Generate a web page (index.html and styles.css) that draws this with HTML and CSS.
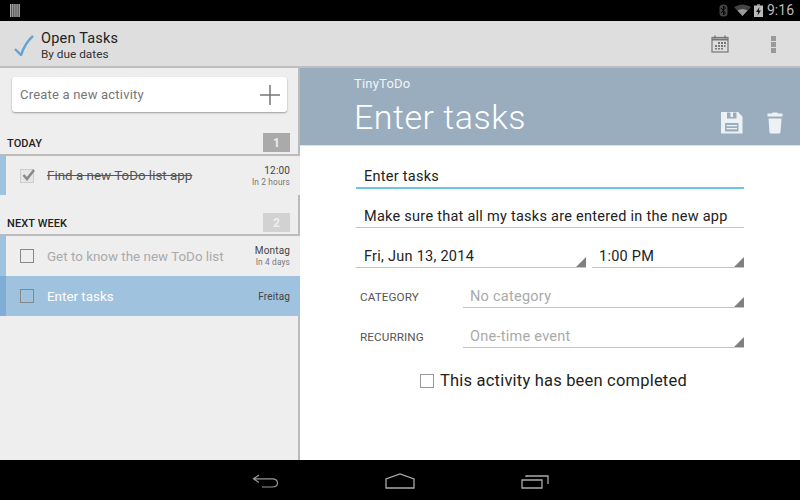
FILE: index.html
```html
<!DOCTYPE html>
<html lang="en">
<head>
<meta charset="utf-8">
<title>Open Tasks</title>
<link rel="stylesheet" href="styles.css">
</head>
<body>
<div class="app">
  <div class="status">
    <svg width="10" height="13" viewBox="0 0 10 13"><path d="M0 0h1.500v13H0zM2.100 0h1.500v13H2.100zM4.200 0h1.500v13H4.200zM6.300 0h1.500v13H6.300zM8.400 0h1.500v13H8.400z" fill="#aaa"/></svg>
    <div class="st-right">
      <svg class="st-bt" width="9" height="13" viewBox="0 0 9 13"><rect x="0.500" y="0.500" width="8" height="12" rx="3.500" fill="#444"/><path d="M2 4l4.500 5L4.500 11V2l2 2L2 9" fill="none" stroke="#000" stroke-width="1"/></svg>
      <svg width="17" height="12" viewBox="0 0 17 12"><path d="M0 3Q8.500-2 17 3L8.500 12z" fill="#444"/><path d="M3.500 6.500Q8.500 3.500 13.500 6.500L8.500 12z" fill="#9a9a9a"/></svg>
      <svg width="9" height="13" viewBox="0 0 9 13"><rect x="3" y="0" width="3" height="2" fill="#777"/><rect x="0" y="1.500" width="9" height="11.500" fill="#bbb"/><path d="M5.500 3L2 8h2.200L3.500 11.500 7 6.500H4.800z" fill="#111"/></svg>
      <span class="clock">9:16</span>
    </div>
  </div>
  <header class="bar">
    <svg class="logo" width="20" height="21" viewBox="0 0 20 21"><path d="M1 14L7 20Q11 8 19 1" fill="none" stroke="#63a3d8" stroke-width="2.400"/></svg>
    <div class="bar-titles">
      <div class="bar-title">Open Tasks</div>
      <div class="bar-sub">By due dates</div>
    </div>
    <svg class="cal" width="18" height="18" viewBox="0 0 18 18"><rect x="1" y="2.500" width="16" height="14.500" fill="none" stroke="#777" stroke-width="1.200"/><path d="M1 4.500h16" stroke="#777" stroke-width="2"/><path d="M4 0.500v3M14 0.500v3" stroke="#777" stroke-width="1.500"/><path d="M7 7h2v2H7zM10 7h2v2h-2zM13 7h2v2h-2zM4 10h2v2H4zM7 10h2v2H7zM10 10h2v2h-2zM13 10h1.500v2H13zM4 13h2v1.500H4zM7 13h2v1.500H7zM10 13h2v1.500h-2z" fill="#777"/></svg>
    <div class="more"><i></i><i></i><i></i></div>
  </header>
  <main class="main">
    <aside class="side">
      <div class="create">
        <span>Create a new activity</span>
        <svg width="20" height="20" viewBox="0 0 20 20"><path d="M10 0v20M0 10h20" stroke="#777" stroke-width="1.500"/></svg>
      </div>
      <div class="sec sec-first"><span class="sec-label">TODAY</span><b class="badge">1</b></div>
      <div class="row row-first">
        <i class="accent"></i>
        <span class="box box-done"><svg width="15" height="13" viewBox="0 0 15 13"><path d="M2.500 6L6 10 13 1" fill="none" stroke="#8a8a8a" stroke-width="2.600"/></svg></span>
        <span class="task task-done">Find a new ToDo list app</span>
        <span class="when"><span class="w1">12:00</span><span class="w2">In 2 hours</span></span>
      </div>
      <div class="sec sec-next"><span class="sec-label">NEXT WEEK</span><b class="badge badge-light">2</b></div>
      <div class="row">
        <i class="accent"></i>
        <span class="box"></span>
        <span class="task task-dim">Get to know the new ToDo list</span>
        <span class="when"><span class="w1">Montag</span><span class="w2">In 4 days</span></span>
      </div>
      <div class="row row-sel">
        <i class="accent"></i>
        <span class="box"></span>
        <span class="task task-sel">Enter tasks</span>
        <span class="when"><span class="w1">Freitag</span></span>
      </div>
    </aside>
    <section class="detail">
      <div class="hero">
        <div class="hero-text">
          <div class="hero-app">TinyToDo</div>
          <div class="hero-title">Enter tasks</div>
        </div>
        <div class="hero-icons">
          <svg width="22" height="22" viewBox="0 0 22 22"><path fill-rule="evenodd" d="M0 0H17L21.500 4.500V21.500H0zM6 0.500V6.500H15.500V0.500H12V5H9.500V0.500zM4 11V19.500H17.500V11z" fill="#eef1f4"/><path d="M5.500 13h10.500v1.300H5.500zM5.500 16h10.500v1.300H5.500z" fill="#eef1f4"/></svg>
          <svg width="16" height="22" viewBox="0 0 16 22"><path d="M5 1.500L5.500 0.500H10.500L11 1.500H15.500V4.500H0.500V1.500z" fill="#eef1f4"/><path d="M1.500 6.500H14.500L13.500 20Q13.400 21.500 12 21.500H4Q2.600 21.500 2.500 20z" fill="#eef1f4"/></svg>
        </div>
      </div>
      <form class="form">
        <div class="field field-active">Enter tasks</div>
        <div class="field">Make sure that all my tasks are entered in the new app</div>
        <div class="pair">
          <div class="field spin spin-date">Fri, Jun 13, 2014</div>
          <div class="field spin spin-time">1:00 PM</div>
        </div>
        <div class="opt">
          <label>CATEGORY</label>
          <div class="field spin dim">No category</div>
        </div>
        <div class="opt">
          <label>RECURRING</label>
          <div class="field spin dim">One-time event</div>
        </div>
        <div class="done"><span class="box box-form"></span><span>This activity has been completed</span></div>
      </form>
    </section>
  </main>
  <nav class="nav">
    <svg width="27" height="14" viewBox="0 0 27 14"><path d="M7 1L1.500 4.800 7 8.500M1.500 4.800H20Q25.500 4.800 25.500 9 25.500 13 20 13H10" fill="none" stroke="#999" stroke-width="1.200"/></svg>
    <svg width="30" height="16" viewBox="0 0 30 16"><path d="M1 15V6L15 1 29 6V15z" fill="none" stroke="#aaa" stroke-width="1.300"/></svg>
    <svg width="28" height="15" viewBox="0 0 28 15"><path d="M1 6h20v8H1z" fill="none" stroke="#aaa" stroke-width="1.300"/><path d="M5 3V2H27V10" fill="none" stroke="#aaa" stroke-width="1.300"/></svg>
  </nav>
</div>
</body>
</html>
```
FILE: styles.css
```css
* { box-sizing: border-box; }
html, body { margin: 0; padding: 0; }
body { font-family: Roboto, "Liberation Sans", sans-serif; background: #000; }
.app { width: 800px; height: 500px; display: flex; flex-direction: column; overflow: hidden; }

.status { height: 21px; flex: none; background: #000; display: flex; align-items: center; justify-content: space-between; padding: 0 6px 1px 10px; }
.st-right { display: flex; align-items: center; gap: 3px; }
.st-bt { margin-right: 3px; }
.clock { color: #bbb; font-size: 14px; margin-left: 1px; }

.bar { height: 47px; flex: none; background: #dedede; border-bottom: 2px solid #bdbdbd; display: flex; align-items: center; padding: 0 24px 0 14px; }
.logo { margin-top: 4px; }
.bar-titles { margin-left: 7px; flex: 1; padding-top: 5px; }
.bar-title { font-size: 14.500px; line-height: 17px; color: #222; letter-spacing: 0.2px; }
.bar-sub { font-size: 11.800px; line-height: 15px; color: #333; }
.cal { margin-top: 1px; margin-right: 42px; }
.more { display: flex; flex-direction: column; gap: 1px; margin-top: 1px; }
.more i { width: 5px; height: 5px; background: #999; display: block; }

.main { flex: 1; display: flex; min-height: 0; }
.side { width: 300px; flex: none; background: #eee; border-right: 2px solid #bbb; padding-top: 9px; }
.create { margin: 0 11px 0 12px; height: 35px; background: #fff; border-radius: 3px; box-shadow: 0 1px 2px rgba(0,0,0,0.35); display: flex; align-items: center; justify-content: space-between; padding: 0 7px 0 8px; font-size: 13px; color: #777; letter-spacing: 0.2px; }
.sec { display: flex; justify-content: space-between; align-items: center; height: 23px; margin-right: -2px; padding: 0 10px 2px 7px; border-bottom: 2px solid #bbb; font-size: 11px; font-weight: 500; color: #222; letter-spacing: 0.1px; }
.sec-label { padding-top: 1px; }
.sec-first { margin-top: 21px; }
.sec-next { margin-top: 18px; }
.badge { width: 27px; height: 19px; background: #aaa; color: #eee; font-size: 12px; font-weight: 700; display: flex; align-items: center; justify-content: center; }
.badge-light { background: #d2d2d2; }
.row { height: 40px; display: flex; align-items: center; margin-right: -2px; padding-right: 10px; background: #eee; }
.row-first { height: 39px; }
.row-sel { background: #9fc2de; }
.accent { width: 6px; align-self: stretch; background: #9fc2de; flex: none; display: block; }
.row-sel .accent { background: #7fadd3; }
.box { width: 14px; height: 14px; border: 1px solid #888; flex: none; margin-left: 14px; display: block; position: relative; }
.box-done { border-color: #ccc; background: #e6e6e6; }
.box-done svg { position: absolute; left: 0; top: -1px; }
.task { margin-left: 13px; flex: 1; font-size: 13.400px; white-space: nowrap; }
.task-done { color: #555; text-decoration: line-through; }
.task-dim { color: #aaa; }
.task-sel { color: #fff; }
.when { display: flex; flex-direction: column; align-items: flex-end; padding-top: 1px; }
.w1 { font-size: 10px; line-height: 12px; color: #444; letter-spacing: 0.15px; }
.w2 { font-size: 8.300px; line-height: 11px; color: #777; letter-spacing: 0.15px; }

.detail { flex: 1; background: #fff; display: flex; flex-direction: column; }
.hero { height: 78px; background: #99adbe; border-bottom: 1px solid #dde3e8; display: flex; justify-content: space-between; align-items: flex-end; padding: 0 17px 0 54px; flex: none; }
.hero-app { color: #f2f4f6; font-size: 13px; line-height: 16px; padding-top: 8px; letter-spacing: 0.2px; }
.hero-text { align-self: flex-start; }
.hero-title { color: #fff; font-size: 34px; font-weight: 300; line-height: 40px; letter-spacing: 0.5px; margin-top: 5px; }
.hero-icons { display: flex; gap: 24px; padding-bottom: 11px; align-items: flex-end; }

.form { padding: 16px 56px 0 56px; display: flex; flex-direction: column; }
.field { height: 26px; border-bottom: 1px solid #c4c4c4; padding: 5px 0 0 8px; font-size: 14.500px; line-height: 20px; color: #222; letter-spacing: 0.26px; white-space: nowrap; position: relative; }
.field-active { border-bottom: 2px solid #6cc4e8; height: 27px; }
.field + .field { margin-top: 13px; }
.pair { display: flex; gap: 6px; margin-top: 14px; }
.pair .field { margin-top: 0; }
.spin::after { content: ""; position: absolute; right: 0; bottom: 0; width: 0; height: 0; border-left: 10px solid transparent; border-bottom: 10px solid #808080; }
.spin-date { width: 230px; }
.spin-time { flex: 1; padding-left: 7px; }
.opt { display: flex; align-items: center; margin-top: 14px; }
.opt label { width: 107px; padding: 4px 0 0 4px; font-size: 11.700px; color: #555; letter-spacing: 0.1px; flex: none; }
.opt .field { flex: 1; padding-left: 7px; }
.dim { color: #aaa; }
.done { display: flex; align-items: center; margin-top: 23px; padding-left: 64px; font-size: 16.500px; color: #222; letter-spacing: 0.2px; }
.box-form { margin-left: 0; margin-right: 6px; border-color: #999; }

.nav { height: 40px; flex: none; background: #000; display: flex; align-items: center; padding: 2px 0 0 252px; gap: 106px; }
```
